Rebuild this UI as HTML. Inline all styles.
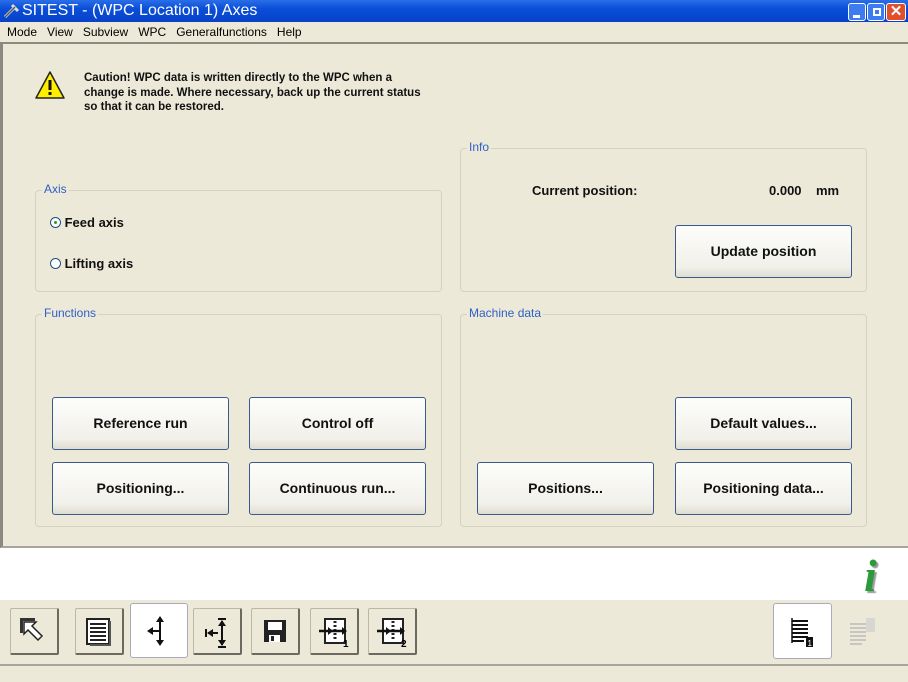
<!DOCTYPE html>
<html><head><style>
*{box-sizing:border-box;margin:0;padding:0}
body{width:908px;height:682px;overflow:hidden;background:#fff;font-family:"Liberation Sans",sans-serif;position:relative}
.abs{position:absolute}
.title{left:0;top:0;width:908px;height:22px;background:linear-gradient(#2a6ee8,#0a4ed8 40%,#0842c8);color:#fff;font-size:16px;line-height:22px;padding-left:22px}
.menu{left:0;top:22px;width:908px;height:20px;background:#ece9d8;font-size:12px;line-height:20px}
.menu span{margin-left:7px;margin-right:3px}
.main{left:0;top:42px;width:908px;height:506px;background:#ece9d8;border-top:2px solid #8c8a80;border-left:3px solid #8c8a80;border-bottom:2px solid #a8a69c}
.grp{position:absolute;border:1px solid #d6d2c2;border-radius:4px}
.gl{position:absolute;top:-9px;left:6px;background:#ece9d8;color:#2f5fc8;font-size:12px;padding:0 2px}
.btn{position:absolute;width:177px;height:53px;border:1px solid #3a5a8c;border-radius:3px;background:linear-gradient(#fdfdfb,#f1f0ea 80%,#e0ddd0);font-size:14px;font-weight:bold;text-align:center;line-height:51px;color:#111}
.b{font-weight:bold;font-size:13px;color:#111}
.tb{position:absolute;top:608px;width:49px;height:47px;border:1px solid #bbb8a8;border-right:2px solid #6c6a60;border-bottom:2px solid #6c6a60;border-radius:2px;background:#ece9d8}
</style></head><body>
<div class="abs title">SITEST - (WPC Location 1) Axes</div>
<svg class="abs" style="left:3px;top:3px" width="18" height="16"><path d="M2 14L12 4M9 2l6 6" stroke="#ddd" stroke-width="3"/><path d="M2 14L12 4" stroke="#555" stroke-width="1.5"/></svg>
<div class="abs" style="left:848px;top:3px;width:18px;height:18px;background:#3c7cf0;border:1px solid #fff;border-radius:3px"><div style="margin:11px 0 0 4px;width:7px;height:3px;background:#fff"></div></div>
<div class="abs" style="left:867px;top:3px;width:18px;height:18px;background:#3c7cf0;border:1px solid #fff;border-radius:3px"><div style="margin:4px 0 0 5px;width:8px;height:8px;border:2px solid #fff"></div></div>
<div class="abs" style="left:886px;top:3px;width:20px;height:18px;background:#e0502c;border:1px solid #fff;border-radius:3px;color:#fff;font-weight:bold;font-size:15px;line-height:16px;text-align:center">✕</div>
<div class="abs menu"><span>Mode</span><span>View</span><span>Subview</span><span>WPC</span><span>Generalfunctions</span><span>Help</span></div>
<div class="abs main">
<svg class="abs" style="left:31px;top:26px" width="32" height="30"><path d="M16 2L30 28H2Z" fill="#ffee00" stroke="#222" stroke-width="1.5" stroke-linejoin="round"/><rect x="14.5" y="10" width="3" height="10" fill="#111"/><rect x="14.5" y="22" width="3" height="3" fill="#111"/></svg>
<div class="abs b" style="left:81px;top:27px;font-size:11.5px;line-height:14.5px">Caution! WPC data is written directly to the WPC when a<br>change is made. Where necessary, back up the current status<br>so that it can be restored.</div>
<div class="grp" style="left:32px;top:146px;width:407px;height:102px"><div class="gl">Axis</div>
<div class="abs b" style="left:14px;top:24px"><span style="display:inline-block;width:11px;height:11px;border:1px solid #1c5180;border-radius:50%;background:#fff;vertical-align:-1px;position:relative"><span style="position:absolute;left:3px;top:3px;width:3px;height:3px;background:#2a9a2a;border-radius:50%"></span></span> Feed axis</div>
<div class="abs b" style="left:14px;top:65px"><span style="display:inline-block;width:11px;height:11px;border:1px solid #1c5180;border-radius:50%;background:#fff;vertical-align:-1px"></span> Lifting axis</div>
</div>
<div class="grp" style="left:457px;top:104px;width:407px;height:144px"><div class="gl">Info</div>
<div class="abs b" style="left:71px;top:34px">Current position:</div>
<div class="abs b" style="left:308px;top:34px">0.000&nbsp;&nbsp;&nbsp;&nbsp;mm</div>
</div>
<div class="grp" style="left:32px;top:270px;width:407px;height:213px"><div class="gl">Functions</div></div>
<div class="grp" style="left:457px;top:270px;width:407px;height:213px"><div class="gl">Machine data</div></div>
<div class="btn" style="left:672px;top:181px">Update position</div>
<div class="btn" style="left:49px;top:353px">Reference run</div>
<div class="btn" style="left:246px;top:353px">Control off</div>
<div class="btn" style="left:49px;top:418px">Positioning...</div>
<div class="btn" style="left:246px;top:418px">Continuous run...</div>
<div class="btn" style="left:672px;top:353px">Default values...</div>
<div class="btn" style="left:474px;top:418px">Positions...</div>
<div class="btn" style="left:672px;top:418px">Positioning data...</div>
</div>
<div class="abs" style="left:864px;top:556px;font-family:'Liberation Serif',serif;font-style:italic;font-weight:bold;font-size:46px;color:#2a9a3a;line-height:40px;text-shadow:2px 2px 1px #999">i</div>
<div class="abs" style="left:0;top:600px;width:908px;height:64px;background:#ece9d8"></div>
<div class="abs" style="left:0;top:664px;width:908px;height:18px;background:#ece9d8;border-top:2px solid #a8a69c"></div>
<div class="tb" style="left:10px"><svg width="46" height="44"><path d="M9 9h15v3H12v12H9z" fill="#333"/><path d="M13 13h12l-4 4 10 10-4 4-10-10-4 4z" fill="#fff" stroke="#222" stroke-width="1.5"/></svg></div>
<div class="tb" style="left:75px"><svg width="46" height="44"><rect x="11" y="10" width="22" height="25" fill="#fff" stroke="#222" stroke-width="2"/><path d="M14 15h16M14 19h16M14 23h16M14 27h16M14 31h16" stroke="#222" stroke-width="2"/><path d="M34 12v24H14" stroke="#555" stroke-width="2" fill="none"/></svg></div>
<div class="tb" style="left:130px;top:603px;width:58px;height:55px;background:#fff;border:1px solid #aab;border-radius:3px"><svg width="56" height="53"><path d="M18 27h12M29 16v22" stroke="#111" stroke-width="2"/><path d="M16 27l6-4v8zM29 12l-4 6h8zM29 42l-4-6h8z" fill="#111"/></svg></div>
<div class="tb" style="left:193px"><svg width="46" height="44"><path d="M12 20v8M14 24h10M24 10h8M24 38h8M28 12v24" stroke="#111" stroke-width="2"/><path d="M13 24l6-4v8zM28 11l-4 6h8zM28 37l-4-6h8z" fill="#111"/></svg></div>
<div class="tb" style="left:251px"><svg width="46" height="44"><rect x="12" y="11" width="22" height="22" fill="#222"/><rect x="16" y="13" width="14" height="8" fill="#fff"/><rect x="17" y="26" width="11" height="7" fill="#fff"/><rect x="19" y="27" width="3" height="5" fill="#222"/></svg></div>
<div class="tb" style="left:310px"><svg width="46" height="44"><rect x="14" y="10" width="20" height="24" fill="#fff" stroke="#222" stroke-width="2"/><path d="M24 12v20" stroke="#222" stroke-width="3" stroke-dasharray="2 2"/><path d="M8 22h26" stroke="#111" stroke-width="2.5"/><path d="M36 22l-5-4v8zM22 22l-5-4v8z" fill="#111"/><text x="32" y="38" font-size="10" font-weight="bold" font-family="Liberation Sans">1</text></svg></div>
<div class="tb" style="left:368px"><svg width="46" height="44"><rect x="14" y="10" width="20" height="24" fill="#fff" stroke="#222" stroke-width="2"/><path d="M24 12v20" stroke="#222" stroke-width="3" stroke-dasharray="2 2"/><path d="M8 22h26" stroke="#111" stroke-width="2.5"/><path d="M36 22l-5-4v8zM22 22l-5-4v8z" fill="#111"/><text x="32" y="38" font-size="10" font-weight="bold" font-family="Liberation Sans">2</text></svg></div>
<div class="abs" style="left:773px;top:603px;width:59px;height:56px;background:#fff;border:1px solid #aab;border-radius:3px"><svg width="57" height="54"><path d="M18 17h16M18 21h16M18 25h16M18 29h16M18 33h16M18 37h12" stroke="#111" stroke-width="2"/><path d="M18 14v25" stroke="#111" stroke-width="1.5"/><rect x="32" y="33" width="7" height="10" fill="#111"/><text x="33.5" y="42" font-size="8" fill="#fff" font-family="Liberation Sans">1</text></svg></div>
<svg class="abs" style="left:846px;top:614px" width="34" height="34"><path d="M4 10h16M4 14h16M4 18h16M4 22h16M4 26h16M4 30h12" stroke="#c8c6c0" stroke-width="2"/><rect x="20" y="4" width="9" height="14" fill="#d8d6d0"/></svg>
</body></html>
